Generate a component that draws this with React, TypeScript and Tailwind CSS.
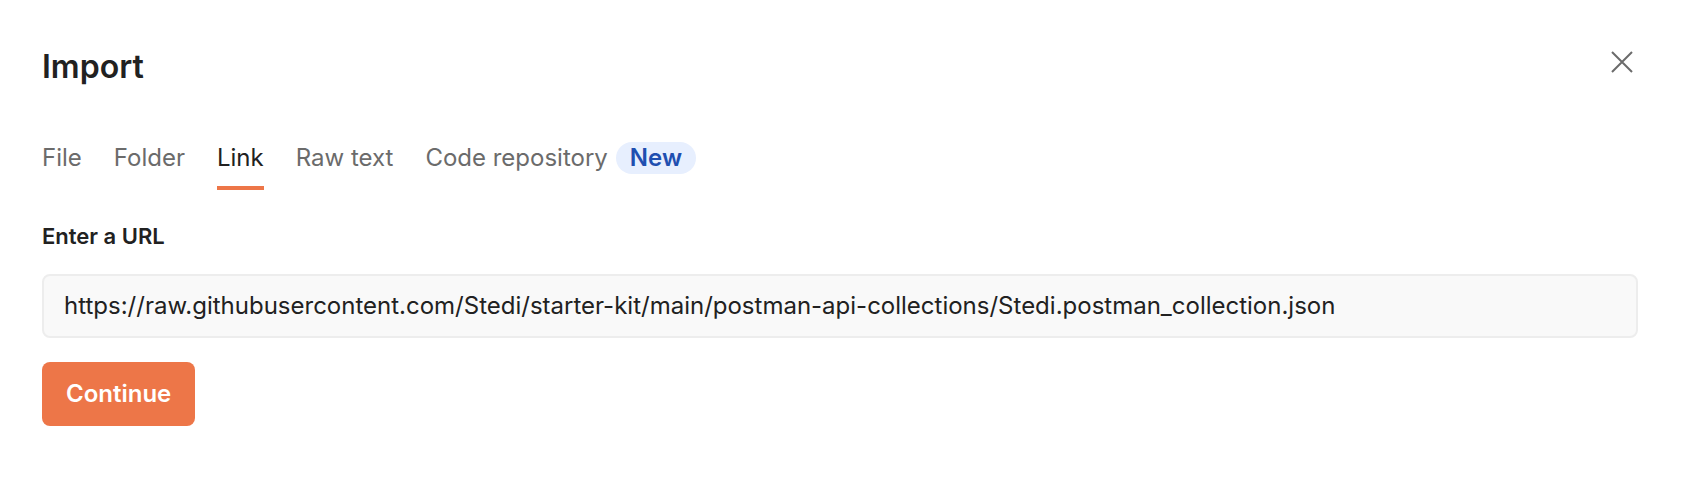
import React, { useState } from "react";

const tabs = ["File", "Folder", "Link", "Raw text", "Code repository"];

export default function App() {
  const [active, setActive] = useState("Link");
  const [url, setUrl] = useState(
    "https://raw.githubusercontent.com/Stedi/starter-kit/main/postman-api-collections/Stedi.postman_collection.json"
  );

  return (
    <main className="bg-white pt-12 pr-[46px] pb-12 pl-[42px] font-[Inter,sans-serif] text-[#212121]">
      <header className="flex items-start justify-between">
        <h1 className="text-[32px] leading-[38px] font-semibold">Import</h1>
        <button type="button" aria-label="Close" className="mt-0.5 mr-1 text-[#6b6b6b]">
          <svg width="24" height="24" viewBox="0 0 24 24" fill="none" stroke="currentColor" strokeWidth="2">
            <path d="M2 2 22 22M22 2 2 22" />
          </svg>
        </button>
      </header>

      <nav className="mt-[50px] flex items-start gap-8 text-2xl">
        {tabs.map((tab) => (
          <button
            key={tab}
            type="button"
            onClick={() => setActive(tab)}
            className={
              tab === active
                ? "flex h-[54px] items-start border-b-4 border-[#ed7648] leading-11 text-[#212121]"
                : "flex h-[54px] items-start leading-11 text-[#6b6b6b]"
            }
          >
            {tab}
            {tab === "Code repository" && (
              <span className="mt-1.5 ml-2 rounded-full bg-[#e7effe] px-3.5 leading-8 font-semibold text-[#1f4fb0]">
                New
              </span>
            )}
          </button>
        ))}
      </nav>

      <form onSubmit={(e) => e.preventDefault()}>
        <label htmlFor="url" className="mt-8 block text-[22px] leading-7 font-semibold">
          Enter a URL
        </label>
        <input
          id="url"
          type="text"
          value={url}
          onChange={(e) => setUrl(e.target.value)}
          className="mt-6 block h-16 w-full rounded-lg border-2 border-[#ededed] bg-[#f9f9f9] px-5 pb-0.5 text-2xl outline-none"
        />
        <button
          type="submit"
          className="mt-6 h-16 rounded-lg bg-[#ed7648] px-6 text-2xl font-semibold text-white"
        >
          Continue
        </button>
      </form>
    </main>
  );
}
